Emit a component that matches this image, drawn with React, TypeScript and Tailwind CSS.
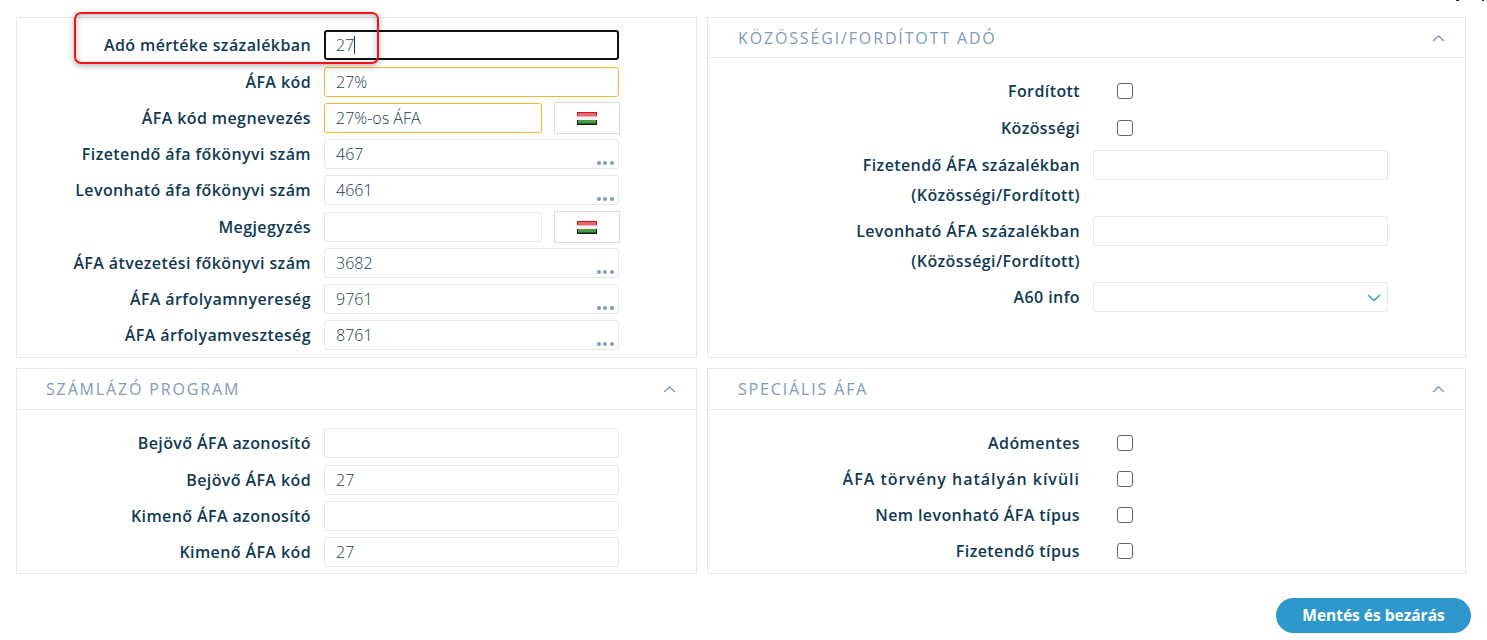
import React from "react";

const font = { fontFamily: '"Open Sans", "Noto Sans", sans-serif' };

const Dots = () => (
  <div className="absolute right-[4px] bottom-[3px] flex gap-[2.7px]">
    <span className="w-[4px] h-[4px] rounded-full bg-[#7f9abb]" />
    <span className="w-[4px] h-[4px] rounded-full bg-[#7f9abb]" />
    <span className="w-[4px] h-[4px] rounded-full bg-[#7f9abb]" />
  </div>
);

const Flag = () => (
  <div className="w-[66px] h-[32px] -my-px ml-[12px] border border-[#dcdcdc] flex items-center justify-center">
    <svg width="20" height="13" viewBox="0 0 20 13">
      <rect width="20" height="4.5" fill="#c8111a" />
      <rect x="1" y="1" width="18" height="3.5" fill="#e4696f" />
      <rect y="4.5" width="20" height="3.5" fill="#f8f0f0" />
      <rect y="8" width="20" height="5" fill="#0b1f0b" />
      <rect x="1" y="8" width="18" height="3.5" fill="#4a9a4a" />
    </svg>
  </div>
);

type FieldProps = {
  value?: string;
  width?: string;
  tone?: "plain" | "amber" | "focus";
  dots?: boolean;
};

const Field = ({ value, width = "w-[295px]", tone = "plain", dots }: FieldProps) => {
  let border = "border-[#e3e8ee]";
  if (tone === "amber") border = "border-[#f7b731]";
  if (tone === "focus") border = "border-[#111111] border-2";
  return (
    <div
      className={`relative h-[30px] ${width} shrink-0 rounded-[3px] border ${border} flex items-center ${tone === "focus" ? "pl-[10px]" : "pl-[11px]"} text-[16px] font-light text-[#183c50]`}
    >
      {value}
      {tone === "focus" && <span className="w-px h-[18px] bg-[#12394f]" />}
      {dots && <Dots />}
    </div>
  );
};

type RowProps = FieldProps & { label: string; flag?: boolean; top: string };

const labelText = "text-right text-[16px] tracking-[0.4px] font-semibold text-[#0f3a52] whitespace-nowrap";

const LeftRow = ({ label, flag, top, ...field }: RowProps) => (
  <div className={`flex items-center ${top}`}>
    <div className={`w-[294px] mr-[13px] -mt-[1px] ${labelText}`}>{label}</div>
    <Field {...field} />
    {flag && <Flag />}
  </div>
);

const CheckRow = ({ label, top, wide }: { label: string; top: string; wide?: boolean }) => (
  <div className={`flex items-center h-[24px] ${top}`}>
    <div className={`w-[372px] -mt-[1px] ${labelText}`}>
      {wide ? <span className="tracking-[1px]">{label}</span> : label}
    </div>
    <div className="w-[16px] h-[16px] ml-[37px] rounded-[3px] border border-[#666666] bg-white" />
  </div>
);

const Header = ({ title, height, inset }: { title: string; height: string; inset: string }) => (
  <div className={`${height} ${inset} border-b border-[#e3e8ee] flex items-center justify-between`}>
    <span className="text-[16px] tracking-[1.85px] text-[#7f9abb]">{title}</span>
    <svg
      className="mr-[20px]"
      width="13"
      height="8"
      viewBox="0 0 13 8"
      fill="none"
      stroke="#7f9abb"
      strokeWidth="1.3"
    >
      <path d="M1 7l5.5-5L12 7" />
    </svg>
  </div>
);

const App: React.FC = () => {
  return (
    <div className="relative w-[1487px] h-[640px] bg-white overflow-hidden" style={font}>
      <div className="absolute left-[1456px] top-0 w-[3px] h-px bg-[#12394f]" />
      <div className="absolute left-[1482px] top-0 w-[2px] h-px bg-[#12394f]" />

      <div className="grid grid-cols-[681px_759px] grid-rows-[341px_206px] gap-x-[10px] gap-y-[10px] pl-[16px] pt-[17px]">
        <div className="border border-[#e3e8ee] pt-[12px]">
          <LeftRow top="" label="Adó mértéke százalékban" value="27" tone="focus" />
          <LeftRow top="mt-[7px]" label="ÁFA kód" value="27%" tone="amber" />
          <LeftRow top="mt-[6px]" label="ÁFA kód megnevezés" value="27%-os ÁFA" tone="amber" width="w-[218px]" flag />
          <LeftRow top="mt-[6px]" label="Fizetendő áfa főkönyvi szám" value="467" dots />
          <LeftRow top="mt-[6px]" label="Levonható áfa főkönyvi szám" value="4661" dots />
          <LeftRow top="mt-[7px]" label="Megjegyzés" width="w-[218px]" flag />
          <LeftRow top="mt-[6px]" label="ÁFA átvezetési főkönyvi szám" value="3682" dots />
          <LeftRow top="mt-[6px]" label="ÁFA árfolyamnyereség" value="9761" dots />
          <LeftRow top="mt-[6px]" label="ÁFA árfolyamveszteség" value="8761" dots />
        </div>

        <div className="border border-[#e3e8ee]">
          <Header title="KÖZÖSSÉGI/FORDÍTOTT ADÓ" height="h-[40px]" inset="pl-[30px]" />
          <CheckRow top="mt-[21px]" label="Fordított" />
          <CheckRow top="mt-[13px]" label="Közösségi" />
          <div className="flex mt-[10px]">
            <div className={`w-[372px] leading-[30px] ${labelText}`}>
              Fizetendő ÁFA százalékban
              <br />
              (Közösségi/Fordított)
            </div>
            <div className="ml-[13px]">
              <Field />
            </div>
          </div>
          <div className="flex mt-[6px]">
            <div className={`w-[372px] leading-[30px] ${labelText}`}>
              Levonható ÁFA százalékban
              <br />
              (Közösségi/Fordított)
            </div>
            <div className="ml-[13px]">
              <Field />
            </div>
          </div>
          <div className="flex items-center mt-[6px]">
            <div className={`w-[372px] -mt-[1px] ${labelText}`}>A60 info</div>
            <div className="relative ml-[13px]">
              <Field />
              <svg
                className="absolute right-[7px] top-[12px]"
                width="14"
                height="8"
                viewBox="0 0 14 8"
                fill="none"
                stroke="#2e9bd0"
                strokeWidth="1.5"
              >
                <path d="M1 1l6 5.5L13 1" />
              </svg>
            </div>
          </div>
        </div>

        <div className="border border-[#e3e8ee]">
          <Header title="SZÁMLÁZÓ PROGRAM" height="h-[41px]" inset="pl-[29px]" />
          <div className="pt-[18px]">
            <LeftRow top="" label="Bejövő ÁFA azonosító" />
            <LeftRow top="mt-[7px]" label="Bejövő ÁFA kód" value="27" />
            <LeftRow top="mt-[6px]" label="Kimenő ÁFA azonosító" />
            <LeftRow top="mt-[6px]" label="Kimenő ÁFA kód" value="27" />
          </div>
        </div>

        <div className="border border-[#e3e8ee]">
          <Header title="SPECIÁLIS ÁFA" height="h-[41px]" inset="pl-[30px]" />
          <CheckRow top="mt-[21px]" label="Adómentes" />
          <CheckRow top="mt-[12px]" label="ÁFA törvény hatályán kívüli" wide />
          <CheckRow top="mt-[12px]" label="Nem levonható ÁFA típus" />
          <CheckRow top="mt-[12px]" label="Fizetendő típus" />
        </div>
      </div>

      <div className="flex justify-end pr-[16px] mt-[24px]">
        <button className="w-[195px] h-[35px] rounded-full bg-[#2e98cc] text-white text-[15.5px] font-bold">
          Mentés és bezárás
        </button>
      </div>

      <div className="absolute left-[74px] top-[12px] w-[305px] h-[52px] rounded-[7px] border-2 border-[#f01414] shadow-[0_2px_6px_rgba(0,0,0,0.3),inset_0_2px_6px_rgba(0,0,0,0.25)]" />
    </div>
  );
};

export default App;
